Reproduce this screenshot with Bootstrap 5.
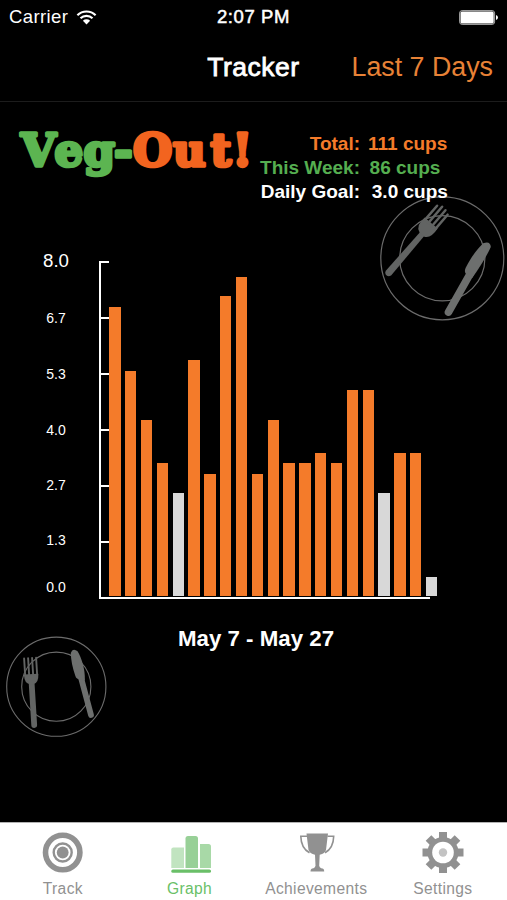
<!DOCTYPE html>
<html lang="en">
<head>
<meta charset="utf-8">
<meta name="viewport" content="width=device-width, initial-scale=1">
<title>Tracker</title>
<link href="https://cdn.jsdelivr.net/npm/bootstrap@5.3.0/dist/css/bootstrap.min.css" rel="stylesheet">
<style>
  :root { --orange: #f47b2a; --green: #55ae50; --ash: #919191; }
  body { font-family: "Liberation Sans", Arial, sans-serif; background: #000; color: #fff; height: 900px; overflow: hidden; }
  svg { display: block; flex: none; }
  .thirds > * { flex: 1 1 0; }
  .status { height: 33px; padding: 1px 9px 0; font-size: 18.5px; letter-spacing: .4px; }
  .status-time { -webkit-text-stroke: .5px #fff; letter-spacing: .6px; }
  .titlebar { height: 69px; padding: 1px 14px 0; font-size: 26.8px; border-bottom: 1px solid #1c1c1c; }
  .titlebar h1 { font-size: 26.5px; font-weight: 400; -webkit-text-stroke: .8px #fff; letter-spacing: .5px; }
  .titlebar a { color: #e88236; }
  .hero { height: 159px; padding: 22px 0 0 14px; }
  .wordmark text { font: bold 45px "DejaVu Serif", serif; stroke-width: 3.6px; stroke-linejoin: round; }
  .stats { grid-template-columns: 105px auto; column-gap: 8px; margin: 8px 0 0; font-size: 19px; line-height: 24px; font-weight: 700; z-index: 1; }
  .stats dt, .stats dd { margin: 0; font-weight: 700; white-space: nowrap; }
  .stats dt { text-align: right; }
  .c-orange { color: var(--orange); }
  .c-green { color: var(--green); }
  .plate-lg { position: absolute; left: 379px; top: 195px; }
  .chart { height: 338px; }
  .scale { width: 99px; padding-left: 42px; grid-template-rows: 56.5px 56px 56.5px 54.5px 55px 47.5px 20px; margin-top: -10px; font-size: 14px; line-height: 20px; }
  .scale span { width: 28px; text-align: center; }
  .scale span:first-child { font-size: 18.7px; }
  .ticks { width: 10px; border-left: 2px solid #fff; }
  .ticks i { height: 2px; background: #fff; }
  .baseline-rule { width: 331px; height: 2px; margin-left: 99px; background: #fff; margin-top: -2px; }
  .bars { gap: 4.54px; height: 334.7px; margin-left: .3px; }
  .bars i { width: 11.3px; background: var(--orange); }
  .bars i.low { background: #d8d8d8; }
  .range { font-size: 22.3px; font-weight: 700; line-height: 28px; margin: 26px 0 0 5px; }
  .plate-sm { margin: -18px 0 0 5px; }
  .tabs { height: 78px; background: #fff; border-top: 1px solid #b2b2b2; }
  .tabs a { color: var(--ash); font-size: 15.6px; letter-spacing: .35px; line-height: 20px; width: 126.7px; padding-top: 7px; }
  .tabs a span { margin: 1px 1px 0 0; }
  .tabs a.active { color: #6abf68; }
</style>
<script src="https://cdn.jsdelivr.net/npm/bootstrap@5.3.0/dist/js/bootstrap.bundle.min.js"></script>
</head>
<body class="d-flex flex-column position-relative">

<div class="status thirds d-flex align-items-center">
  <div class="d-flex align-items-center">
    <span>Carrier</span>
    <svg class="ms-2" width="21" height="15" viewBox="0 0 21 15" fill="none" stroke="#fff">
      <path d="M1.400 5.200a13 13 0 0 1 18.200 0" stroke-width="2.200"/>
      <path d="M4.500 8.300a8.600 8.600 0 0 1 12 0" stroke-width="2.200"/>
      <path d="M6.900 10.800a5.200 5.200 0 0 1 7.200 0l-3.600 3.600z" fill="#fff" stroke="none"/>
    </svg>
  </div>
  <div class="status-time text-center">2:07 PM</div>
  <div class="d-flex justify-content-end">
    <svg width="39" height="15" viewBox="0 0 39 15"><rect x=".6" y=".6" width="35" height="13.800" rx="2.500" fill="none" stroke="#aaa"/><rect x="1.500" y="1.500" width="33.200" height="12" rx="1.500" fill="#fff"/><path d="M37 5q2 .6 2 2.500T37 10z" fill="#fff"/></svg>
  </div>
</div>

<nav class="titlebar thirds d-flex align-items-center">
  <span></span>
  <h1 class="m-0 text-center">Tracker</h1>
  <a class="text-end text-decoration-none text-nowrap" href="#">Last 7 Days</a>
</nav>

<main class="flex-grow-1">
  <div class="hero d-flex align-items-start">
    <svg class="wordmark" width="241" height="60" viewBox="14 124 241 60" role="img" aria-label="Veg-Out!">
      <text y="166" x="21 54.500 83.500 114" fill="#5cb551" stroke="#5cb551">Veg-</text>
      <text y="166" x="133 173 210.500 232.500" fill="#f2641f" stroke="#f2641f">Out!</text>
    </svg>
    <dl class="stats d-grid position-relative">
      <dt class="c-orange">Total:</dt><dd class="c-orange">111 cups</dd>
      <dt class="c-green">This Week:</dt><dd class="c-green">&hairsp;86 cups</dd>
      <dt>Daily Goal:</dt><dd>&thinsp;3.0 cups</dd>
    </dl>
    <svg class="plate-lg" width="127" height="127" viewBox="379 195 127 127" fill="none">
      <g stroke="#6c6c6c" stroke-width="1.200"><circle cx="442.300" cy="258.300" r="61.500"/><circle cx="442.300" cy="258.300" r="42.600"/></g>
      <g transform="translate(389 272.500) rotate(40.500)" fill="#626463" stroke="#626463" stroke-linecap="round">
        <path d="M-3.600 0C-3.600 5 3.600 5 3.600 0L3-53H-2.500Z" stroke="none"/>
        <path d="M-8.500-65Q-10.500-53-3-50.500L3-50Q10-52 8.500-65Z" stroke="none"/>
        <path d="M-6.800-63V-82M-2.300-63V-84.500M2.500-63V-84M7-63V-82" stroke-width="2.500"/>
      </g>
      <g transform="translate(448 313) rotate(29.500)" fill="#6d6f6e" stroke="#6d6f6e" stroke-linecap="round">
        <path d="M0-1V-46" stroke-width="7.600"/>
        <path d="M-3.800-43Q-6.500-44-6.800-48C-7.500-60-6-70-3.700-78Q1-84 4.800-78.500Q6-64 3.800-42Z" stroke="none"/>
      </g>
    </svg>
  </div>

  <section class="chart d-flex align-items-start">
    <div class="scale d-grid"><span>8.0</span><span>6.7</span><span>5.3</span><span>4.0</span><span>2.7</span><span>1.3</span><span>0.0</span></div>
    <div class="ticks d-flex flex-column justify-content-between h-100"><i></i><i></i><i></i><i></i><i></i><i></i><i></i></div>
    <div class="bars d-flex align-items-end">
      <i style="height:288.4px"></i><i style="height:225px"></i><i style="height:175.7px"></i><i style="height:133px"></i><i class="low" style="height:103px"></i><i style="height:236px"></i><i style="height:122px"></i><i style="height:299.700px"></i><i style="height:318.500px"></i><i style="height:122px"></i><i style="height:175.700px"></i><i style="height:133px"></i><i style="height:133px"></i><i style="height:142.400px"></i><i style="height:133px"></i><i style="height:206px"></i><i style="height:206px"></i><i class="low" style="height:103px"></i><i style="height:142.400px"></i><i style="height:142.400px"></i><i class="low" style="height:19px"></i>
    </div>
  </section>
  <div class="baseline-rule"></div>

  <div class="range text-center">May 7 - May 27</div>

  <svg class="plate-sm" width="103" height="103" viewBox="5 635 103 103" fill="none">
    <g stroke="#6c6c6c" stroke-width="1.100"><circle cx="56.300" cy="686.700" r="49.600"/><circle cx="56.300" cy="686.700" r="34.600"/></g>
    <g transform="translate(34.200 725) rotate(-3.500)" fill="#636564" stroke="#636564" stroke-linecap="round">
      <path d="M0 0V-44" stroke-width="5.800"/>
      <path d="M-7.200-50Q-7-42-2-41H2Q7-42 7.200-50V-51H-7.200Z" stroke="none"/>
      <path d="M-6-50V-67M-2-50V-67M2-50V-67M6-50V-67" stroke-width="1.900"/>
    </g>
    <g transform="translate(91 715) rotate(-15)" fill="#6d6f6e" stroke="#6d6f6e" stroke-linecap="round">
      <path d="M0 0V-39" stroke-width="5.800"/>
      <path d="M3-35C6.500-46 5.500-58 3.500-65Q0-70-3.500-65Q-6-55-5-42Q-5-38-1-37Z" stroke="none"/>
    </g>
  </svg>
</main>

<footer class="tabs d-flex">
  <a class="d-flex flex-column align-items-center text-decoration-none" href="#">
    <svg width="44" height="48" viewBox="0 0 44 48" fill="none" stroke="#919191"><circle cx="21.700" cy="22.500" r="17.200" stroke-width="5.600"/><circle cx="21.700" cy="22.500" r="9" stroke-width="2.400"/><circle cx="21.700" cy="22.500" r="5.900" fill="#919191" stroke="none"/></svg>
    <span>Track</span>
  </a>
  <a class="active d-flex flex-column align-items-center text-decoration-none" href="#">
    <svg width="44" height="48" viewBox="0 0 44 48"><path d="M3.300 38V19.500q0-2 2-2H16V38z" fill="#c1e4c0"/><path d="M17.500 38V8.500q0-2.500 2.500-2.500h7.500q2.500 0 2.500 2.500V38z" fill="#98d097"/><path d="M32 38V14h8.500q2.500 0 2.500 2.500V38z" fill="#a8d9a7"/><rect x="3.300" y="39.500" width="39.700" height="3.300" rx="1.600" fill="#6abf68"/></svg>
    <span>Graph</span>
  </a>
  <a class="d-flex flex-column align-items-center text-decoration-none" href="#">
    <svg width="44" height="48" viewBox="0 0 44 48" fill="#919191"><path d="M11.500 3.500h21.500l-2 16.500q-1 3.500-6.300 4.700l-.5 11q.3 1.800 2 2.500 3 0 3 3.300H15.500q0-3.300 3-3.300 1.700-.7 2-2.500l-.5-11q-5.300-1.200-6.500-4.700z"/><path d="M12 6.200H5.800Q6 18 14.500 22.800M32.500 6.200H38.700Q38.500 18 30 22.800" fill="none" stroke="#919191" stroke-width="1.600"/></svg>
    <span>Achievements</span>
  </a>
  <a class="d-flex flex-column align-items-center text-decoration-none" href="#">
    <svg width="44" height="48" viewBox="0 0 44 48"><g transform="translate(22 22.500)"><g fill="#919191"><path d="M-4-20.500H4V20.500H-4zM-20.500-4V4H20.500V-4z"/><path d="M-4-20.500H4V20.500H-4zM-20.500-4V4H20.500V-4z" transform="rotate(45)"/><circle r="15.500"/></g><circle r="10.800" fill="#fff"/><circle r="4.200" fill="#c3c3c3"/></g></svg>
    <span>Settings</span>
  </a>
</footer>
</body>
</html>
